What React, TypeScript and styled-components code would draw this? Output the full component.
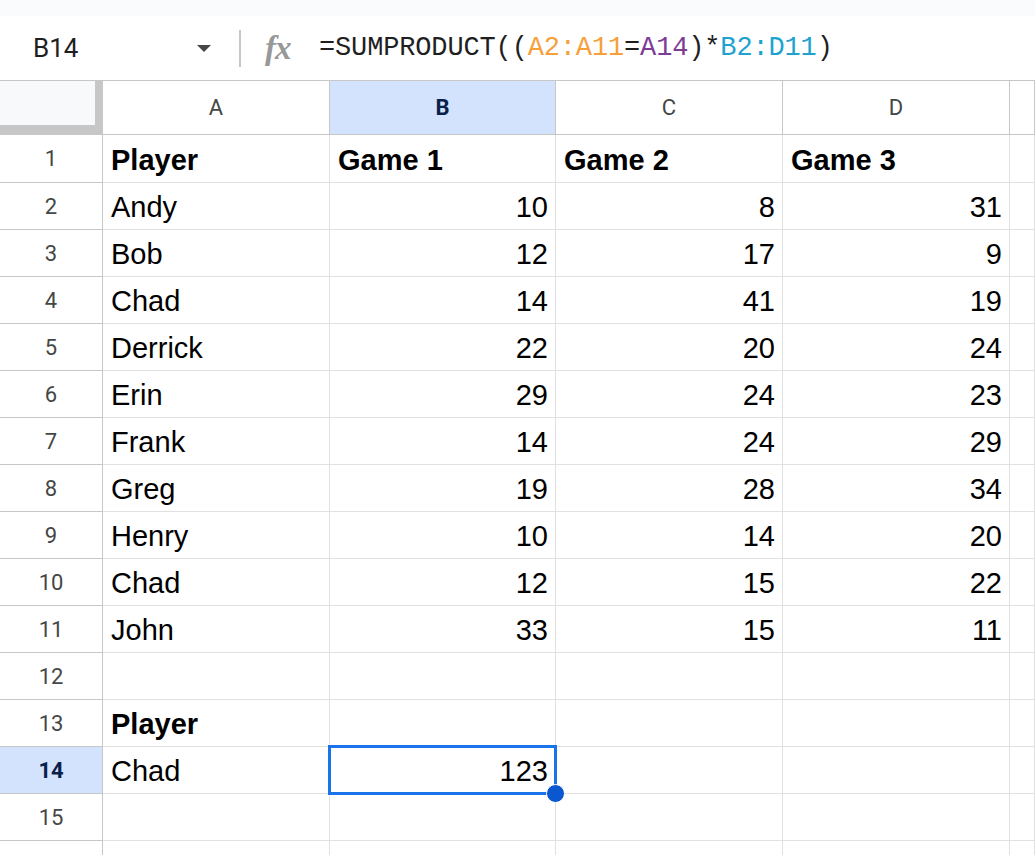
import React from 'react'
import styled, { createGlobalStyle, css } from 'styled-components'

const GlobalStyle = createGlobalStyle`
  html, body {
    margin: 0;
    padding: 0;
    background: #ffffff;
    overflow: hidden;
  }
  * {
    box-sizing: border-box;
  }
`

const COLS = '103px 227px 226px 227px 227px 1fr'

const Page = styled.div`
  width: 1035px;
  height: 855px;
  overflow: hidden;
  background: #ffffff;
  font-family: Roboto, 'Liberation Sans', sans-serif;
`

const TopStrip = styled.div`
  height: 16px;
  background: #f9fbfd;
`

const FormulaBar = styled.div`
  height: 65px;
  display: flex;
  align-items: center;
  border-bottom: 1px solid #c7c7c7;
  background: #ffffff;
`

const NameBox = styled.div`
  width: 239px;
  display: flex;
  align-items: center;
  padding-left: 33px;
  padding-right: 28px;
  font-family: Roboto, sans-serif;
  font-size: 26px;
  color: #1f1f1f;
`

const NameText = styled.span`
  flex: 1;
`

const Caret = styled.span`
  width: 0;
  height: 0;
  border-left: 7px solid transparent;
  border-right: 7px solid transparent;
  border-top: 7px solid #444746;
`

const Divider = styled.div`
  width: 2px;
  height: 37px;
  background: #c7c7c7;
`

const FxIcon = styled.span`
  margin-left: 24px;
  width: 54px;
  font-family: 'Liberation Serif', serif;
  font-style: italic;
  font-weight: bold;
  font-size: 33px;
  color: #989898;
  letter-spacing: -1px;
`

const Formula = styled.div`
  font-family: 'Liberation Mono', monospace;
  font-size: 27px;
  letter-spacing: -0.15px;
  color: #1f1f1f;
  white-space: pre;
`

const Ref = styled.span<{ $tone: string }>`
  color: ${p => p.$tone};
`

const Row = styled.div<{ $h: number }>`
  display: grid;
  grid-template-columns: ${COLS};
  height: ${p => p.$h}px;
`

const Corner = styled.div`
  background: #f8f9fa;
  border-right: 8px solid #c7c7c7;
  border-bottom: 10px solid #c7c7c7;
`

const headActive = css`
  background: #d3e3fd;
  color: #0b1f4b;
  font-weight: bold;
`

const ColHead = styled.div<{ $active?: boolean }>`
  display: flex;
  align-items: center;
  justify-content: center;
  border-right: 1px solid #c7c7c7;
  border-bottom: 1px solid #c7c7c7;
  font-size: 22px;
  color: #444746;
  ${p => p.$active && headActive}
`

const RowHead = styled.div<{ $active?: boolean }>`
  display: flex;
  align-items: center;
  justify-content: center;
  border-right: 1px solid #c7c7c7;
  border-bottom: 1px solid #c7c7c7;
  font-size: 22px;
  color: #444746;
  ${p => p.$active && headActive}
`

const Cell = styled.div<{ $num?: boolean; $bold?: boolean }>`
  position: relative;
  display: flex;
  align-items: center;
  justify-content: ${p => (p.$num ? 'flex-end' : 'flex-start')};
  padding: 3px 7px 0 8px;
  border-right: 1px solid #e1e1e1;
  border-bottom: 1px solid #e1e1e1;
  font-family: 'Liberation Sans', Arial, sans-serif;
  font-size: 29px;
  font-weight: ${p => (p.$bold ? 'bold' : 'normal')};
  color: #000000;
  white-space: nowrap;
`

const Selection = styled.div`
  position: absolute;
  top: -2px;
  left: -2px;
  right: -2px;
  bottom: -2px;
  border: 3px solid #1a73e8;
  pointer-events: none;
  z-index: 2;
`

const FillHandle = styled.div`
  position: absolute;
  right: -11px;
  bottom: -11px;
  width: 19px;
  height: 19px;
  border-radius: 50%;
  background: #0b57d0;
  border: 1px solid #ffffff;
`

type Value = string | number | null

const data: Value[][] = [
  ['Player', 'Game 1', 'Game 2', 'Game 3'],
  ['Andy', 10, 8, 31],
  ['Bob', 12, 17, 9],
  ['Chad', 14, 41, 19],
  ['Derrick', 22, 20, 24],
  ['Erin', 29, 24, 23],
  ['Frank', 14, 24, 29],
  ['Greg', 19, 28, 34],
  ['Henry', 10, 14, 20],
  ['Chad', 12, 15, 22],
  ['John', 33, 15, 11],
  [],
  ['Player'],
  ['Chad', 123],
  [],
  [],
]

const boldRows = [1, 13]
const columns = ['A', 'B', 'C', 'D', '']

const App = () => (
  <Page>
    <GlobalStyle />
    <TopStrip />
    <FormulaBar>
      <NameBox>
        <NameText>B14</NameText>
        <Caret />
      </NameBox>
      <Divider />
      <FxIcon>fx</FxIcon>
      <Formula>
        =SUMPRODUCT((<Ref $tone="#f6a03c">A2:A11</Ref>=<Ref $tone="#7d3d96">A14</Ref>)*
        <Ref $tone="#1ea3d0">B2:D11</Ref>)
      </Formula>
    </FormulaBar>

    <Row $h={54}>
      <Corner />
      {columns.map((c, i) => (
        <ColHead key={i} $active={c === 'B'}>
          {c}
        </ColHead>
      ))}
    </Row>

    {data.map((row, r) => {
      const n = r + 1
      return (
        <Row key={n} $h={n === 1 ? 48 : 47}>
          <RowHead $active={n === 14}>{n}</RowHead>
          {columns.map((_, c) => {
            const v = row[c] ?? null
            const selected = n === 14 && c === 1
            return (
              <Cell key={c} $num={typeof v === 'number'} $bold={boldRows.includes(n)}>
                {v}
                {selected && (
                  <Selection>
                    <FillHandle />
                  </Selection>
                )}
              </Cell>
            )
          })}
        </Row>
      )
    })}
  </Page>
)

export default App
